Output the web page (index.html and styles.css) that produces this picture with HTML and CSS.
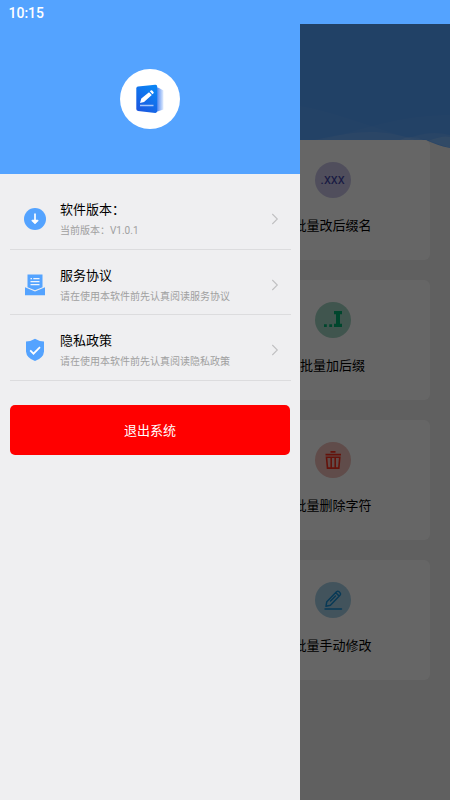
FILE: index.html
```html
<!DOCTYPE html>
<html lang="zh-CN">
<head>
<meta charset="utf-8">
<title>批量改名</title>
<link rel="stylesheet" href="styles.css">
</head>
<body>
<main class="page">
  <svg class="hero" viewBox="0 0 450 126" width="450" height="126">
    <path fill="#54a3ff" d="M0 0H450V124Q436 121 426 116H0Z"/>
    <path fill="#fff" fill-opacity=".03" d="M300 82C335 88 365 101 402 112L424 116H300Z"/>
    <path fill="#fff" fill-opacity=".03" d="M450 91C400 91 360 106 322 116H426L450 124Z"/>
    <path fill="#fff" fill-opacity=".09" d="M315 116C355 107 380 104 415 116Z"/>
    <path fill="#fff" fill-opacity=".15" d="M400 116Q411 110 424 116ZM428 117Q443 111 450 113V124Q438 121 428 117Z"/>
    <path fill="#fff" fill-opacity=".08" d="M412 113Q432 106 450 111V124L427 116Z"/>
  </svg>
  <section class="cards">
    <article class="card">
      <span class="badge badge-purple">.xxx</span>
      <h3>批量改后缀名</h3>
    </article>
    <article class="card">
      <span class="badge badge-green"><svg viewBox="0 0 36 36" width="36" height="36"><path fill="#00ae70" d="M9 22.300h2.800v2.700H9zM14.300 22.300h2.800v2.700h-2.800zM19 9h8v3.200h-2v9.600h2V25h-8v-3.200h2v-9.600h-2z"/></svg></span>
      <h3>批量加后缀</h3>
    </article>
    <article class="card">
      <span class="badge badge-red"><svg viewBox="0 0 36 36" width="36" height="36" fill="none" stroke="#fa2f1c" stroke-width="1.6"><path d="M10.500 12.600h15.500M15.500 9.900h5M11.500 15.300h13.300l-1 10.800H12.500zM16.200 15v11M20.200 15v11"/></svg></span>
      <h3>批量删除字符</h3>
    </article>
    <article class="card">
      <span class="badge badge-blue"><svg viewBox="0 0 36 36" width="36" height="36" fill="none" stroke="#168fd6" stroke-width="1.5" stroke-linecap="round" stroke-linejoin="round"><path d="M10 27h16.500M11 24.300l.8-4.600L21.500 9.800q1.300-1.200 2.600 0l.9.900q1.200 1.300 0 2.600l-9.600 9.900zM20.800 10.800l3.400 3.300M15.500 19l5-5"/></svg></span>
      <h3>批量手动修改</h3>
    </article>
  </section>
</main>
<div class="scrim"></div>
<header class="statusbar">10:15</header>
<aside class="drawer">
  <div class="profile">
    <div class="logo">
      <svg viewBox="0 0 60 60" width="60" height="60">
        <defs>
          <linearGradient id="cover" x1="0" y1="1" x2=".6" y2="0"><stop offset="0" stop-color="#1d52dd"/><stop offset="1" stop-color="#0b83f4"/></linearGradient>
          <linearGradient id="pages"><stop offset="0" stop-color="#3a77ed"/><stop offset="1" stop-color="#e4efff"/></linearGradient>
        </defs>
        <path fill="url(#pages)" d="M36 18l3 1 4.500 2.500v19L39 42l-3 1z"/>
        <path fill="url(#cover)" d="M18 17.500Q16.300 17.700 16.300 19.500V40q0 1.600 1.700 1.900l17.300 2q1.900.1 1.900-1.800V17.500q0-2-2-1.800z"/>
        <path fill="#fff" d="M20 34l1.300-4.400 7.700-6.400 2.800 2.800-7.800 7zM29.800 22.300l1-.8q.7-.5 1.400.1l1.300 1.300q.6.700 0 1.400l-1 1z"/>
        <path stroke="#a5c6fb" stroke-width="1.500" d="M20 36.500h13.500"/>
      </svg>
    </div>
  </div>
  <nav class="menu">
    <a class="row">
      <svg class="row-icon" viewBox="0 0 24 24" width="24" height="24"><circle cx="12" cy="12" r="11" fill="#54a3ff"/><path d="M12 6.500v9" fill="none" stroke="#fff" stroke-width="1.700"/><path d="M8.600 13.700L12 17l3.400-3.300-.8-.7H9.400z" fill="#fff" stroke="#fff" stroke-width=".5"/></svg>
      <span class="text"><b>软件版本：</b><small>当前版本：V1.0.1</small></span>
      <svg class="chevron" viewBox="0 0 8 12" width="8" height="12"><path d="M1.300 1l5 5-5 5"/></svg>
    </a>
    <a class="row">
      <svg class="row-icon" viewBox="0 0 24 24" width="24" height="24"><path fill="#54a3ff" d="M4.500 1.500h15v12.700L12 17.200l-7.500-3zM2 14.200l10 4.300 10-4.300v8.100H2z"/><path stroke="#eef4fc" stroke-width="1.200" d="M7.500 5.700h1.500M10.300 5.700h6.200M7.500 8.700h9M7.500 11.700h9"/></svg>
      <span class="text"><b>服务协议</b><small>请在使用本软件前先认真阅读服务协议</small></span>
      <svg class="chevron" viewBox="0 0 8 12" width="8" height="12"><path d="M1.300 1l5 5-5 5"/></svg>
    </a>
    <a class="row">
      <svg class="row-icon" viewBox="0 0 24 24" width="24" height="24"><path fill="#54a3ff" d="M12 .8Q16 3.500 21 3.500V13.500Q20.500 20 12 23 3.500 20 3 13.500V3.500Q8 3.500 12 .8z"/><path d="M7.200 12.300l3.300 3.400 6.500-6.500" fill="none" stroke="#fff" stroke-width="1.700"/></svg>
      <span class="text"><b>隐私政策</b><small>请在使用本软件前先认真阅读隐私政策</small></span>
      <svg class="chevron" viewBox="0 0 8 12" width="8" height="12"><path d="M1.300 1l5 5-5 5"/></svg>
    </a>
  </nav>
  <button class="logout">退出系统</button>
</aside>
</body>
</html>
```
FILE: styles.css
```css
* { box-sizing: border-box; }
body {
  margin: 0;
  height: 800px;
  position: relative;
  overflow: hidden;
  background: #efefef;
  font-family: Roboto, "Noto Sans CJK SC", sans-serif;
  color: #000;
}
.page { padding-top: 24px; }
.hero { display: block; }
.cards {
  position: relative;
  display: grid;
  gap: 20px;
  margin: -10px 20px 0 235px;
}
.card {
  height: 120px;
  border-radius: 6px;
  background: #fff;
  display: flex;
  flex-direction: column;
  align-items: center;
  padding-top: 22px;
}
.card h3 {
  margin: 18px 0 0;
  font-size: 13px;
  line-height: 20px;
  font-weight: 400;
  white-space: nowrap;
}
.badge {
  width: 36px;
  height: 36px;
  border-radius: 50%;
  display: flex;
  align-items: center;
  justify-content: center;
}
.badge-purple {
  background: #c8c4e6;
  color: #3c40a4;
  font: 14px/34px Roboto, sans-serif;
  padding-bottom: 2px;
}
.badge-green { background: #a1d4c2; }
.badge-red { background: #efbdb8; }
.badge-blue { background: #a5d0e6; }
.scrim {
  position: absolute;
  inset: 24px 0 0;
  background: rgba(0, 0, 0, .6);
}
.statusbar {
  position: absolute;
  inset: 0 0 auto;
  height: 24px;
  padding-left: 8.5px;
  background: #54a3ff;
  color: #fff;
  font-size: 14px;
  font-weight: 500;
  line-height: 26px;
}
.drawer {
  position: absolute;
  top: 24px;
  bottom: 0;
  left: 0;
  width: 300px;
  background: #efeff1;
}
.profile {
  height: 150px;
  display: flex;
  align-items: center;
  justify-content: center;
  background: #54a3ff;
}
.logo {
  width: 60px;
  height: 60px;
  border-radius: 50%;
  background: #fff;
}
.menu { padding: 10px 10px 0; }
.row {
  display: flex;
  align-items: center;
  height: 65.5px;
  padding: 7px 12px 0 13px;
  margin-right: -1px;
  border-bottom: 1px solid #dcdcde;
}
.row-icon { align-self: flex-start; margin-top: 16px; }
.text {
  flex: 1;
  display: flex;
  flex-direction: column;
  gap: 3px;
  margin-left: 13px;
}
.text b { font-size: 13px; line-height: 20px; font-weight: 400; }
.text small { font-size: 10px; line-height: 16px; color: #a0a0a0; }
.chevron {
  margin-bottom: 1px;
  fill: none;
  stroke: #c0c0c2;
  stroke-width: 1.1;
}
.logout {
  display: block;
  width: 280px;
  height: 50px;
  margin: 24.5px 10px 0;
  padding: 0 0 1px;
  border: 0;
  border-radius: 5px;
  background: #f00;
  color: #fff;
  font: 13px "Noto Sans CJK SC", sans-serif;
}
```
